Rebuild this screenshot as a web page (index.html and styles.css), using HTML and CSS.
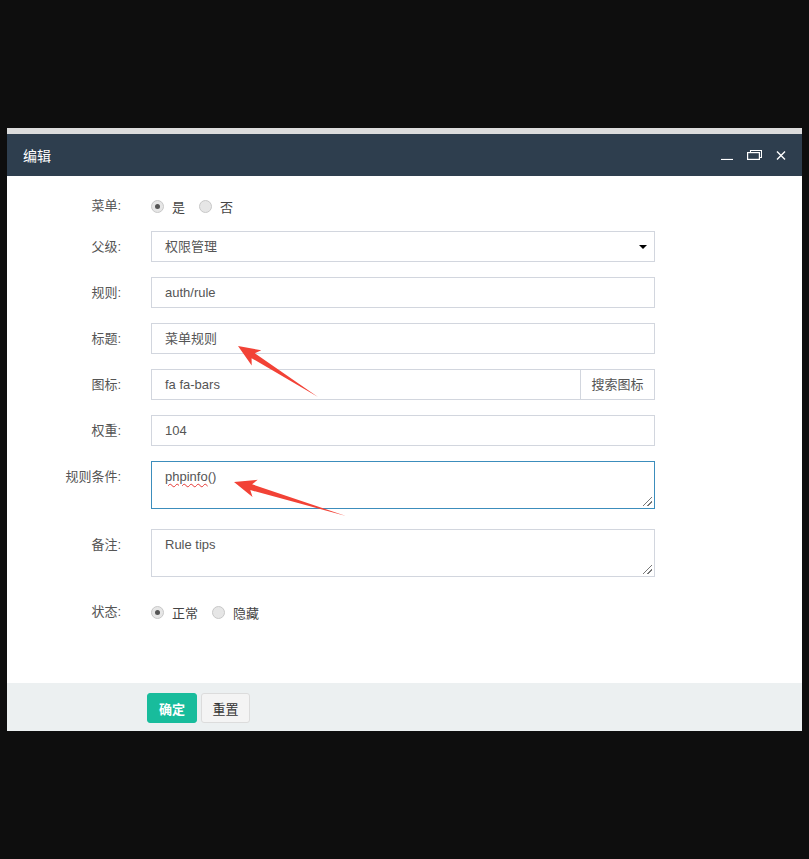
FILE: index.html
```html
<!DOCTYPE html>
<html lang="zh-CN">
<head>
    <meta charset="UTF-8">
    <title>编辑</title>
    <link rel="stylesheet" href="styles.css">
</head>
<body>
    <div class="layer">
        <div class="layer-strip"></div>
        <div class="layer-title">
            <span class="title-text">编辑</span>
            <div class="title-tools">
                <svg width="12" height="10" viewBox="0 0 12 10"><path d="M0 9.5h12" stroke="#fff" stroke-width="1.2"/></svg>
                <svg width="15" height="10" viewBox="0 0 15 10"><path d="M3.5 2.5v-2h11v7h-2" fill="none" stroke="#fff" stroke-width="1.1"/><rect x="0.6" y="2.6" width="11.8" height="6.8" fill="none" stroke="#fff" stroke-width="1.2"/></svg>
                <svg width="10" height="9" viewBox="0 0 10 9"><path d="M1 0.5l8 8M9 0.5l-8 8" stroke="#fff" stroke-width="1.4"/></svg>
            </div>
        </div>

        <div class="layer-body">
            <div class="form-row radio-row">
                <label class="form-label">菜单:</label>
                <div class="form-field">
                    <span class="radio checked"></span><span class="radio-text">是</span>
                    <span class="radio"></span><span class="radio-text">否</span>
                </div>
            </div>
            <div class="form-row">
                <label class="form-label">父级:</label>
                <div class="form-field">
                    <div class="input select">权限管理<span class="caret"></span></div>
                </div>
            </div>
            <div class="form-row">
                <label class="form-label">规则:</label>
                <div class="form-field"><div class="input">auth/rule</div></div>
            </div>
            <div class="form-row">
                <label class="form-label">标题:</label>
                <div class="form-field"><div class="input">菜单规则</div></div>
            </div>
            <div class="form-row">
                <label class="form-label">图标:</label>
                <div class="form-field">
                    <div class="input-group">
                        <div class="input group-input">fa fa-bars</div>
                        <span class="addon">搜索图标</span>
                    </div>
                </div>
            </div>
            <div class="form-row">
                <label class="form-label">权重:</label>
                <div class="form-field"><div class="input">104</div></div>
            </div>
            <div class="form-row area-row">
                <label class="form-label">规则条件:</label>
                <div class="form-field">
                    <div class="textarea focused"><span class="typo">phpinfo</span>()<span class="grip"></span></div>
                </div>
            </div>
            <div class="form-row area-row">
                <label class="form-label">备注:</label>
                <div class="form-field">
                    <div class="textarea">Rule tips<span class="grip"></span></div>
                </div>
            </div>
            <div class="form-row radio-row">
                <label class="form-label">状态:</label>
                <div class="form-field">
                    <span class="radio checked"></span><span class="radio-text">正常</span>
                    <span class="radio"></span><span class="radio-text">隐藏</span>
                </div>
            </div>
        </div>

        <div class="layer-footer">
            <button class="btn btn-success">确定</button>
            <button class="btn btn-default">重置</button>
        </div>
    </div>

    <!-- annotation arrows drawn over the form -->
    <svg class="marks" width="809" height="859" viewBox="0 0 809 859">
        <polygon points="238,346 261.3,350.2 254.8,353.2 318,397 251.6,358.2 251.7,365.4" fill="#f24236"/>
        <polygon points="234,482 257.7,479.8 252.1,484.3 346,516 250.3,490.1 252.5,497" fill="#f24236"/>
    </svg>
</body>
</html>
```

FILE: styles.css
```css
body {
    margin: 0;
    width: 809px;
    height: 859px;
    background-color: #0e0e0e;
    font-family: "Liberation Sans", "Noto Sans CJK SC", sans-serif;
    font-size: 13px;
    color: #555;
    position: relative;
    overflow: hidden;
}

.layer {
    width: 795px;
    margin-left: 7px;
    padding-top: 128px;
}
.layer-strip {
    height: 6px;
    background-color: #dcdcdc;
}
.layer-title {
    height: 42px;
    background-color: #2e3e4e;
    color: #fff;
    display: flex;
    align-items: center;
    justify-content: space-between;
    padding: 0 16px 0 16px;
}
.title-text {
    font-size: 14px;
}
.title-tools {
    display: flex;
    align-items: center;
    gap: 14px;
}

.layer-body {
    height: 507px;
    box-sizing: border-box;
    background-color: #fff;
    padding-top: 15px;
}
.form-row {
    display: flex;
    margin-bottom: 15px;
}
.radio-row {
    height: 30px;
    margin-bottom: 10px;
    align-items: center;
}
.area-row {
    margin-bottom: 20px;
}
.form-label {
    width: 129px;
    box-sizing: border-box;
    padding-right: 15px;
    text-align: right;
    line-height: 31px;
    color: #555;
}
.radio-row .form-label {
    line-height: 30px;
}
.form-field {
    width: 504px;
    margin-left: 15px;
    display: flex;
    align-items: center;
}

.input {
    width: 100%;
    height: 31px;
    box-sizing: border-box;
    border: 1px solid #d2d6de;
    padding: 0 13px;
    line-height: 29px;
    color: #555;
}
.select {
    position: relative;
}
.caret {
    position: absolute;
    right: 7px;
    top: 13px;
    border-left: 4px solid transparent;
    border-right: 4px solid transparent;
    border-top: 4px solid #000;
}
.input-group {
    display: flex;
    width: 100%;
}
.group-input {
    flex: 1;
}
.addon {
    width: 74px;
    height: 31px;
    box-sizing: border-box;
    border: 1px solid #d2d6de;
    border-left: none;
    line-height: 29px;
    text-align: center;
    color: #555;
}
.textarea {
    width: 100%;
    height: 48px;
    box-sizing: border-box;
    border: 1px solid #d2d6de;
    padding: 5px 13px;
    line-height: 20px;
    position: relative;
    color: #555;
}
.textarea.focused {
    border-color: #3c8dbc;
}
.typo {
    text-decoration: underline wavy #e53935;
    text-decoration-thickness: 1px;
    text-underline-offset: 2px;
}
.grip {
    position: absolute;
    right: 2px;
    bottom: 2px;
    width: 9px;
    height: 9px;
    background: linear-gradient(135deg, transparent 45%, #777 45%, #777 52%, transparent 52%, transparent 72%, #777 72%, #777 80%, transparent 80%);
}

.radio {
    width: 11px;
    height: 11px;
    border-radius: 50%;
    border: 1px solid #c8c8c8;
    background-color: #e6e6e6;
    position: relative;
    margin-right: 8px;
}
.radio.checked::after {
    content: "";
    position: absolute;
    left: 3px;
    top: 3px;
    width: 5px;
    height: 5px;
    border-radius: 50%;
    background-color: #555;
}
.radio-text {
    margin-right: 14px;
    color: #444;
}

.layer-footer {
    height: 48px;
    box-sizing: border-box;
    background-color: #ecf0f1;
    padding: 10px 0 0 140px;
    display: flex;
    align-items: flex-start;
    gap: 4px;
}
.btn {
    height: 30px;
    padding: 0;
    border-radius: 3px;
    font-family: "Liberation Sans", "Noto Sans CJK SC", sans-serif;
    font-size: 13px;
    white-space: nowrap;
    text-align: center;
}
.btn-success {
    width: 50px;
    background-color: #18bc9c;
    border: 1px solid #18bc9c;
    color: #fff;
    font-weight: bold;
}
.btn-default {
    width: 49px;
    background-color: #f4f4f4;
    border: 1px solid #dcdcdc;
    color: #333;
}

.marks {
    position: absolute;
    left: 0;
    top: 0;
    pointer-events: none;
}
```
